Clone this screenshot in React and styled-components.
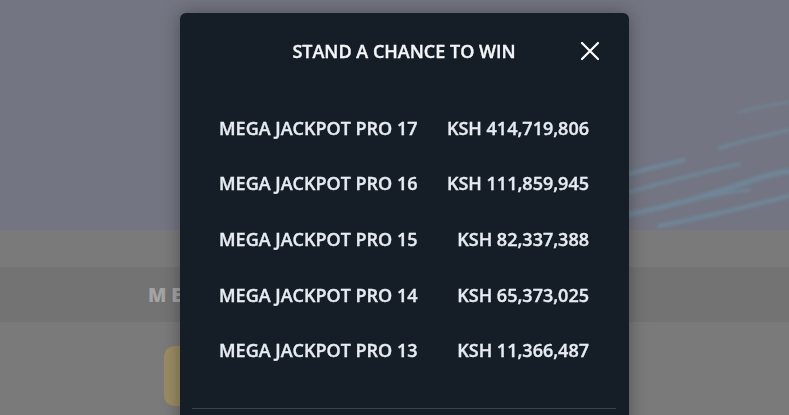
import React from 'react';
import styled, { createGlobalStyle } from 'styled-components';

const GlobalStyle = createGlobalStyle`
  html, body {
    margin: 0;
    padding: 0;
    height: 100%;
    overflow: hidden;
    background: #7a7a7a;
    font-family: 'Open Sans', 'Liberation Sans', sans-serif;
  }
`;

const Page = styled.div`
  display: flex;
  flex-direction: column;
  height: 415px;
`;

const Hero = styled.div`
  position: relative;
  height: 230px;
  background: #737682;
  overflow: hidden;
`;

const Waves = styled.svg`
  position: absolute;
  right: 0;
  bottom: 0;
  width: 200px;
  height: 140px;
`;

const Strip = styled.div`
  height: 37px;
  background: #7a7a7a;
`;

const TitleBand = styled.div`
  height: 55px;
  background: #737373;
  display: flex;
  align-items: center;
  padding-left: 148px;
`;

const BandTitle = styled.h2`
  margin: 0;
  font-size: 19px;
  font-weight: 800;
  letter-spacing: 5px;
  color: #a4a4a4;
`;

const Lower = styled.div`
  flex: 1;
  background: #7a7a7a;
  padding: 24px 0 0 164px;
`;

const CtaButton = styled.div`
  width: 160px;
  height: 60px;
  border-radius: 10px;
  background: #9a8b62;
`;

const Modal = styled.div`
  position: fixed;
  left: 180px;
  top: 13px;
  width: 449px;
  height: 430px;
  box-sizing: border-box;
  padding: 0 40px 0 39px;
  background: #151d27;
  border-radius: 6px;
  box-shadow: 0 0 18px rgba(0, 0, 0, 0.35);
  display: flex;
  flex-direction: column;
`;

const Header = styled.div`
  position: relative;
  height: 76px;
  display: flex;
  align-items: center;
  justify-content: center;
`;

const Title = styled.h3`
  margin: 0;
  font-size: 18px;
  font-weight: 600;
  color: #f4f6f8;
  -webkit-text-stroke: 0.35px currentColor;
`;

const Close = styled.button`
  position: absolute;
  right: -12px;
  top: 50%;
  transform: translateY(-50%);
  width: 22px;
  height: 22px;
  padding: 0;
  border: none;
  background: none;
  cursor: pointer;
  display: flex;
  align-items: center;
  justify-content: center;
`;

const List = styled.div`
  padding-top: 11px;
  display: flex;
  flex-direction: column;
`;

const Row = styled.div`
  height: 55.6px;
  display: flex;
  align-items: center;
  justify-content: space-between;
  font-size: 18px;
  font-weight: 600;
  color: #e6ecf1;
  -webkit-text-stroke: 0.35px currentColor;
`;

const Separator = styled.div`
  margin: 30px -27px 0 -27px;
  height: 1px;
  background: #3a434e;
`;

const jackpots = [
  { name: 'MEGA JACKPOT PRO 17', amount: 'KSH 414,719,806' },
  { name: 'MEGA JACKPOT PRO 16', amount: 'KSH 111,859,945' },
  { name: 'MEGA JACKPOT PRO 15', amount: 'KSH 82,337,388' },
  { name: 'MEGA JACKPOT PRO 14', amount: 'KSH 65,373,025' },
  { name: 'MEGA JACKPOT PRO 13', amount: 'KSH 11,366,487' },
];

const App = () => (
  <>
    <GlobalStyle />
    <Page>
      <Hero>
        <Waves viewBox="0 0 200 140" preserveAspectRatio="none">
          <defs>
            <filter id="soft" x="-10%" y="-50%" width="120%" height="200%">
              <feGaussianBlur stdDeviation="1.6" />
            </filter>
          </defs>
          <g stroke="#6d8ea3" strokeLinecap="round" fill="none" opacity="0.7" filter="url(#soft)">
            <path d="M25 88 Q60 78 95 70" strokeWidth="4" />
            <path d="M40 102 Q90 88 150 74" strokeWidth="3" />
            <path d="M20 128 Q80 118 140 98 T200 82" strokeWidth="5" />
            <path d="M70 136 Q130 124 200 106" strokeWidth="4" />
            <path d="M130 58 Q165 48 200 40" strokeWidth="3" />
            <path d="M90 114 Q120 104 160 100" strokeWidth="3" />
            <path d="M150 22 Q175 16 200 12" strokeWidth="2" />
          </g>
        </Waves>
      </Hero>
      <Strip />
      <TitleBand>
        <BandTitle>ME</BandTitle>
      </TitleBand>
      <Lower>
        <CtaButton />
      </Lower>
    </Page>
    <Modal>
      <Header>
        <Title>STAND A CHANCE TO WIN</Title>
        <Close aria-label="Close">
          <svg width="20" height="20" viewBox="0 0 20 20">
            <path d="M2 2 L18 18 M18 2 L2 18" stroke="#ffffff" strokeWidth="2.2" strokeLinecap="round" />
          </svg>
        </Close>
      </Header>
      <List>
        {jackpots.map((j) => (
          <Row key={j.name}>
            <span>{j.name}</span>
            <span>{j.amount}</span>
          </Row>
        ))}
      </List>
      <Separator />
    </Modal>
  </>
);

export default App;
